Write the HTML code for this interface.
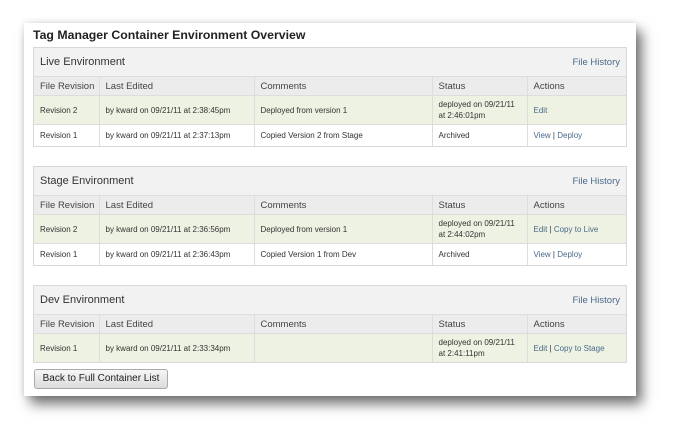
<!DOCTYPE html>
<html><head><style>
body{margin:0;width:680px;height:442px;background:#fff;font-family:"Liberation Sans",sans-serif;position:relative;overflow:hidden}
.card{position:absolute;left:24px;top:23px;width:612px;height:373px;background:#fff;box-shadow:6px 8px 12px rgba(0,0,0,.55),0 0 6px rgba(0,0,0,.12)}
h1{position:absolute;left:9px;top:5px;margin:0;font-size:12.3px;font-weight:bold;color:#222;white-space:nowrap}
.sec{position:absolute;left:9px;width:592px;border:1px solid #d8d8d8;background:#fff}
.hd{height:28px;background:#f2f2f2;border-bottom:1px solid #ddd;position:relative;font-size:11px;color:#333}
.hd span{position:absolute;left:6px;top:8px}
.hd a{position:absolute;right:6px;top:9px;font-size:9.5px;color:#4a6a8a}
table{border-collapse:collapse;width:100%;font-size:8px;color:#333;table-layout:fixed}
td,th{border-left:1px solid #ddd;padding:0 6px;text-align:left;font-weight:normal;white-space:nowrap;overflow:hidden}
td:first-child,th:first-child{border-left:none}
th{background:#ececec;height:18px;font-size:9.5px;color:#444;border-bottom:1px solid #ddd}
tr.g td{background:#eef2e2;height:28px;line-height:11px}
tr.w td{height:21px;border-top:1px solid #ddd}
a{color:#4a6a8a;text-decoration:none}
.btn{position:absolute;left:10px;top:346px;width:132px;height:18px;border:1px solid #aaa;border-radius:3px;background:linear-gradient(#f6f6f6,#dcdcdc);font-size:10px;color:#222;line-height:18px;text-align:center;white-space:nowrap}
</style></head><body>
<div class="card">
<h1>Tag Manager Container Environment Overview</h1>
<div class="sec" style="top:24px">
<div class="hd"><span>Live Environment</span><a>File History</a></div>
<table><colgroup><col style="width:65px"><col style="width:155px"><col style="width:178px"><col style="width:95px"><col></colgroup>
<tr><th>File Revision</th><th>Last Edited</th><th>Comments</th><th>Status</th><th>Actions</th></tr>
<tr class="g"><td>Revision 2</td><td>by kward on 09/21/11 at 2:38:45pm</td><td>Deployed from version 1</td><td>deployed on 09/21/11<br>at 2:46:01pm</td><td><a>Edit</a></td></tr>
<tr class="w"><td>Revision 1</td><td>by kward on 09/21/11 at 2:37:13pm</td><td>Copied Version 2 from Stage</td><td>Archived</td><td><a>View</a> | <a>Deploy</a></td></tr>
</table></div>
<div class="sec" style="top:143px">
<div class="hd"><span>Stage Environment</span><a>File History</a></div>
<table><colgroup><col style="width:65px"><col style="width:155px"><col style="width:178px"><col style="width:95px"><col></colgroup>
<tr><th>File Revision</th><th>Last Edited</th><th>Comments</th><th>Status</th><th>Actions</th></tr>
<tr class="g"><td>Revision 2</td><td>by kward on 09/21/11 at 2:36:56pm</td><td>Deployed from version 1</td><td>deployed on 09/21/11<br>at 2:44:02pm</td><td><a>Edit</a> | <a>Copy to Live</a></td></tr>
<tr class="w"><td>Revision 1</td><td>by kward on 09/21/11 at 2:36:43pm</td><td>Copied Version 1 from Dev</td><td>Archived</td><td><a>View</a> | <a>Deploy</a></td></tr>
</table></div>
<div class="sec" style="top:262px">
<div class="hd"><span>Dev Environment</span><a>File History</a></div>
<table><colgroup><col style="width:65px"><col style="width:155px"><col style="width:178px"><col style="width:95px"><col></colgroup>
<tr><th>File Revision</th><th>Last Edited</th><th>Comments</th><th>Status</th><th>Actions</th></tr>
<tr class="g"><td>Revision 1</td><td>by kward on 09/21/11 at 2:33:34pm</td><td></td><td>deployed on 09/21/11<br>at 2:41:11pm</td><td><a>Edit</a> | <a>Copy to Stage</a></td></tr>
</table></div>
<div class="btn">Back to Full Container List</div>
</div>
</body></html>
